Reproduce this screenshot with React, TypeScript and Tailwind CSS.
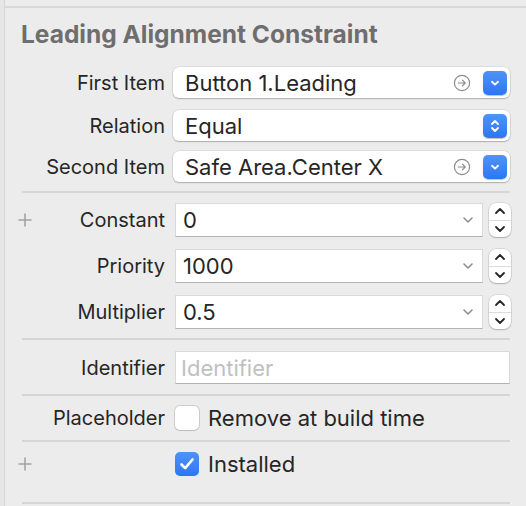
import React from 'react'

const FONT = { fontFamily: 'Inter, "Noto Sans", sans-serif' }

function Plus() {
  return (
    <svg width="14" height="14" viewBox="0 0 14 14" className="shrink-0">
      <path d="M7 0.5v13M0.5 7h13" stroke="#a3a3a3" strokeWidth="1.6" />
    </svg>
  )
}

function ArrowCircle() {
  return (
    <svg width="18" height="18" viewBox="0 0 18 18" className="shrink-0">
      <circle cx="9" cy="9" r="7.6" fill="none" stroke="#8c8c8c" strokeWidth="1.2" />
      <path d="M5.2 9h7M9.4 6.2 12.2 9 9.4 11.8" fill="none" stroke="#8c8c8c" strokeWidth="1.2" strokeLinecap="round" strokeLinejoin="round" />
    </svg>
  )
}

function BlueButton({ updown = false }: { updown?: boolean }) {
  return (
    <div className="w-[24px] h-[24px] rounded-[5px] bg-gradient-to-b from-[#4f93f8] to-[#2c76f4] flex items-center justify-center shadow-[0_0.5px_1px_rgba(0,0,0,0.25)]">
      {updown ? (
        <svg width="12" height="16" viewBox="0 0 12 16">
          <path d="M3 6 6 3 9 6M3 10 6 13 9 10" fill="none" stroke="#fff" strokeWidth="1.9" strokeLinecap="round" strokeLinejoin="round" />
        </svg>
      ) : (
        <svg width="12" height="12" viewBox="0 0 12 12">
          <path d="M3 4.8 6 7.6 9 4.8" fill="none" stroke="#fff" strokeWidth="1.9" strokeLinecap="round" strokeLinejoin="round" />
        </svg>
      )}
    </div>
  )
}

function Popup({ value, arrow = true, updown = false }: { value: string; arrow?: boolean; updown?: boolean }) {
  return (
    <div className="w-[337px] h-[31px] bg-white rounded-[6px] shadow-[0_0_0_0.5px_rgba(0,0,0,0.12),0_1px_1.5px_rgba(0,0,0,0.22)] flex items-center pl-[12px] pr-[3px]">
      <span className="flex-1 text-[22px] text-[#262626] leading-none">{value}</span>
      {arrow && (
        <div className="mr-[12px]">
          <ArrowCircle />
        </div>
      )}
      <BlueButton updown={updown} />
    </div>
  )
}

function Stepper() {
  return (
    <div className="w-[22px] h-[34px] rounded-[7px] bg-white shadow-[0_0_0_0.5px_rgba(0,0,0,0.15),0_1px_1.5px_rgba(0,0,0,0.2)] flex flex-col">
      <div className="flex-1 flex items-center justify-center border-b border-[#dcdcdc]">
        <svg width="12" height="8" viewBox="0 0 12 8">
          <path d="M2 6 6 2 10 6" fill="none" stroke="#262626" strokeWidth="1.8" strokeLinecap="round" strokeLinejoin="round" />
        </svg>
      </div>
      <div className="flex-1 flex items-center justify-center">
        <svg width="12" height="8" viewBox="0 0 12 8">
          <path d="M2 2 6 6 10 2" fill="none" stroke="#262626" strokeWidth="1.8" strokeLinecap="round" strokeLinejoin="round" />
        </svg>
      </div>
    </div>
  )
}

function Combo({ value }: { value: string }) {
  return (
    <div className="flex items-center gap-[6px]">
      <div className="w-[308px] h-[34px] bg-white border border-[#d9d9d9] border-b-[#b3b3b3] flex items-center pl-[7px] pr-[8px]">
        <span className="flex-1 text-[22px] text-[#262626] leading-none">{value}</span>
        <svg width="12" height="8" viewBox="0 0 12 8">
          <path d="M2 2 6 6 10 2" fill="none" stroke="#8e8e8e" strokeWidth="1.6" strokeLinecap="round" strokeLinejoin="round" />
        </svg>
      </div>
      <Stepper />
    </div>
  )
}

function Row({ label, plus = false, children, className = '' }: { label?: string; plus?: boolean; children: React.ReactNode; className?: string }) {
  return (
    <div className={`flex items-center ${className}`}>
      <div className="w-[147px] flex items-center justify-between shrink-0">
        {plus ? <Plus /> : <span />}
        <span className="text-[20px] text-[#262626] leading-none">{label}</span>
      </div>
      <div className="ml-[9px]">{children}</div>
    </div>
  )
}

function Sep() {
  return <div className="ml-[4px] mr-[16px] h-[2px] bg-[#d6d6d6]" />
}

function Checkbox({ checked = false }: { checked?: boolean }) {
  if (checked) {
    return (
      <div className="w-[24px] h-[24px] rounded-[5px] bg-gradient-to-b from-[#4f93f8] to-[#2c76f4] flex items-center justify-center">
        <svg width="16" height="14" viewBox="0 0 16 14">
          <path d="M2.5 7.5 6.2 11.2 13.5 2.5" fill="none" stroke="#fff" strokeWidth="2.6" strokeLinecap="round" strokeLinejoin="round" />
        </svg>
      </div>
    )
  }
  return <div className="w-[24px] h-[24px] rounded-[5px] bg-white shadow-[0_0_0_1px_rgba(0,0,0,0.13),0_1px_1px_rgba(0,0,0,0.08)]" />
}

export default function App() {
  return (
    <div className="w-[526px] h-[506px] bg-[#ececec] flex overflow-hidden" style={FONT}>
      <div className="w-[4px] bg-[#e6e6e6]" />
      <div className="w-[1px] bg-[#d6d6d6]" />
      <div className="flex-1 flex flex-col">
        <div className="h-[6px]" />
        <div className="h-[2px] bg-[#d9d9d9]" />
        <div className="pl-[16px] pt-[14px] h-[59px]">
          <span className="text-[24.5px] font-bold text-[#6e6e6e] leading-none">Leading Alignment Constraint</span>
        </div>
        <div className="pl-[13px] flex flex-col">
          <Row label="First Item">
            <div className="-ml-[1px]"><Popup value="Button 1.Leading" /></div>
          </Row>
          <Row label="Relation" className="mt-[12px]">
            <div className="-ml-[1px]"><Popup value="Equal" arrow={false} updown /></div>
          </Row>
          <Row label="Second Item" className="mt-[10px]">
            <div className="-ml-[1px]"><Popup value="Safe Area.Center X" /></div>
          </Row>
          <div className="mt-[9px]"><Sep /></div>
          <Row label="Constant" plus className="mt-[10px]">
            <div className="ml-[1px]"><Combo value="0" /></div>
          </Row>
          <Row label="Priority" className="mt-[12px]">
            <div className="ml-[1px]"><Combo value="1000" /></div>
          </Row>
          <Row label="Multiplier" className="mt-[12px]">
            <div className="ml-[1px]"><Combo value="0.5" /></div>
          </Row>
          <div className="mt-[9px]"><Sep /></div>
          <Row label="Identifier" className="mt-[11px]">
            <div className="ml-[1px] w-[335px] h-[33px] bg-white border border-[#d9d9d9] border-b-[#b3b3b3] flex items-center pl-[5px]">
              <span className="text-[22px] text-[#c0c0c0] leading-none">Identifier</span>
            </div>
          </Row>
          <div className="mt-[10px]"><Sep /></div>
          <Row label="Placeholder" className="mt-[10px]">
            <div className="ml-[1px] flex items-center gap-[9px]">
              <Checkbox />
              <span className="text-[22px] text-[#262626] leading-none">Remove at build time</span>
            </div>
          </Row>
          <div className="mt-[10px]"><Sep /></div>
          <Row plus className="mt-[10px]">
            <div className="ml-[1px] flex items-center gap-[9px]">
              <Checkbox checked />
              <span className="text-[22px] text-[#262626] leading-none">Installed</span>
            </div>
          </Row>
          <div className="mt-[26px]"><Sep /></div>
        </div>
      </div>
    </div>
  )
}
